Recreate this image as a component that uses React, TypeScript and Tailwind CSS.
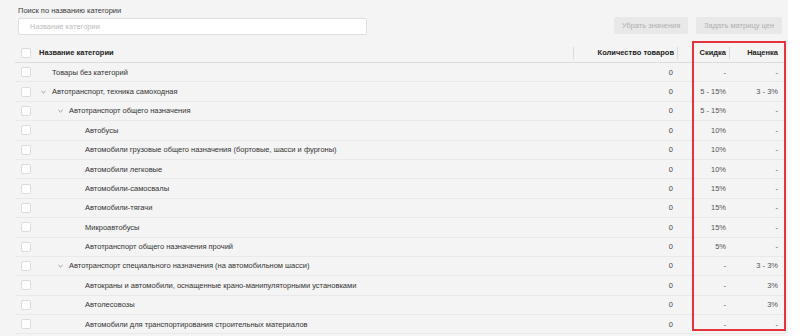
import React from 'react';

type Row = { name: string; level: 0 | 1 | 2; open?: boolean; count: string; discount: string; markup: string };

const rows: Row[] = [
  { name: 'Товары без категорий', level: 0, count: '0', discount: '-', markup: '-' },
  { name: 'Автотранспорт, техника самоходная', level: 0, open: true, count: '0', discount: '5 - 15%', markup: '3 - 3%' },
  { name: 'Автотранспорт общего назначения', level: 1, open: true, count: '0', discount: '5 - 15%', markup: '-' },
  { name: 'Автобусы', level: 2, count: '0', discount: '10%', markup: '-' },
  { name: 'Автомобили грузовые общего назначения (бортовые, шасси и фургоны)', level: 2, count: '0', discount: '10%', markup: '-' },
  { name: 'Автомобили легковые', level: 2, count: '0', discount: '10%', markup: '-' },
  { name: 'Автомобили-самосвалы', level: 2, count: '0', discount: '15%', markup: '-' },
  { name: 'Автомобили-тягачи', level: 2, count: '0', discount: '15%', markup: '-' },
  { name: 'Микроавтобусы', level: 2, count: '0', discount: '15%', markup: '-' },
  { name: 'Автотранспорт общего назначения прочий', level: 2, count: '0', discount: '5%', markup: '-' },
  { name: 'Автотранспорт специального назначения (на автомобильном шасси)', level: 1, open: true, count: '0', discount: '-', markup: '3 - 3%' },
  { name: 'Автокраны и автомобили, оснащенные крано-манипуляторными установками', level: 2, count: '0', discount: '-', markup: '3%' },
  { name: 'Автолесовозы', level: 2, count: '0', discount: '-', markup: '3%' },
  { name: 'Автомобили для транспортирования строительных материалов', level: 2, count: '0', discount: '-', markup: '-' },
];

const Checkbox = () => (
  <span className="w-[10px] h-[10px] shrink-0 rounded-[2px] border border-[#dcdcdc] bg-white" />
);

const Chevron = () => (
  <svg className="w-[5px] h-[4px] shrink-0 mr-[6px] text-[#888]" viewBox="0 0 6 4" fill="none" stroke="currentColor" strokeWidth={1}>
    <path d="M0.5 0.8L3 3.2L5.5 0.8" />
  </svg>
);

// space between checkbox and the name, per tree level
const indent = { 0: 'w-[21px]', 1: 'w-[38px]', 2: 'w-[54px]' } as const;

export default function App() {
  return (
    <div className="w-[800px] h-[336px] bg-white flex overflow-hidden" style={{ fontFamily: '"Liberation Sans", Arial, sans-serif' }}>
      <div className="relative w-[788px] h-full bg-[#f4f4f4] pl-[15px] pr-[3px] text-[7.5px] text-[#333]">
        <div className="flex items-end justify-between pt-[6px] pl-[3px] pr-[3px]">
          <div>
            <div className="h-[10px] leading-[10px] mb-[2px] text-[#3a3a3a]">Поиск по названию категории</div>
            <div className="w-[349px] h-[17px] bg-white border border-[#dedede] rounded-[2px] flex items-center pl-[11px] text-[#bdbdbd]">
              Название категории
            </div>
          </div>
          <div className="flex gap-[8px] mb-[1px]">
            <button className="h-[17px] w-[74px] rounded-[2px] bg-[#e8e8e8] text-[#b0b0b0]">Убрать значения</button>
            <button className="h-[17px] w-[86px] rounded-[2px] bg-[#e8e8e8] text-[#b0b0b0]">Задать матрицу цен</button>
          </div>
        </div>

        <div className="mt-[8px]">
          <div className="flex items-center h-[20px] border-b border-[#dddddd] font-bold text-[#222]">
            <div className="flex-1 flex items-center pl-[6px] gap-[8px]">
              <Checkbox />
              <span>Название категории</span>
            </div>
            <div className="w-[104px] h-[12px] border-l border-[#dadada] flex items-center justify-end pr-[3px]">Количество товаров</div>
            <div className="w-[52px] h-[12px] border-l border-[#dadada] flex items-center justify-end pr-[3px]">Скидка</div>
            <div className="w-[56px] h-[12px] border-l border-[#dadada] flex items-center justify-end pr-[7px]">Наценка</div>
          </div>

          {rows.map((r) => (
            <div key={r.name} className="flex items-center h-[19.4px] border-b border-[#e9e9e9]">
              <div className="flex-1 min-w-0 flex items-center pl-[6px]">
                <Checkbox />
                <div className={`shrink-0 flex items-center justify-end ${indent[r.level]}`}>
                  {r.open && <Chevron />}
                </div>
                <span className="whitespace-nowrap">{r.name}</span>
              </div>
              <div className="w-[104px] text-right pr-[4px] text-[#444]">{r.count}</div>
              <div className="w-[52px] text-right pr-[3px] text-[#555]">{r.discount}</div>
              <div className="w-[56px] text-right pr-[7px] text-[#555]">{r.markup}</div>
            </div>
          ))}
        </div>

        <div className="absolute left-[692px] top-[41px] w-[94px] h-[290px] border-2 border-[#e5333d] pointer-events-none" />
      </div>
    </div>
  );
}
